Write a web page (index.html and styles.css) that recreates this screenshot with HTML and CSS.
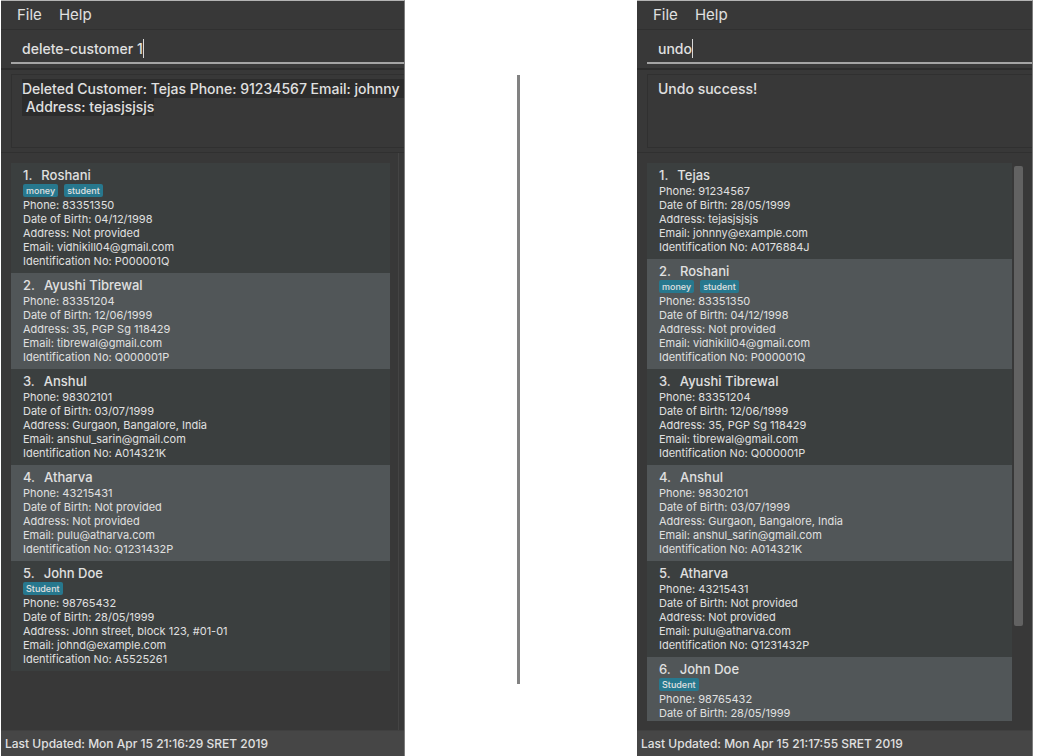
FILE: index.html
```html
<!DOCTYPE html>
<html lang="en">
<head>
<meta charset="utf-8">
<title>Customer list: delete and undo</title>
<link rel="stylesheet" href="styles.css">
</head>
<body>
<main class="compare">
  <section class="window">
    <nav class="menu"><button type="button">File</button><button type="button">Help</button></nav>
    <div class="command"><div class="field"><input type="text" size="14" value="delete-customer 1" aria-label="Command"><span class="caret"></span></div></div>
    <div class="result"><div class="result-box"><p class="message"><span class="selected">Deleted Customer: Tejas Phone: 91234567 Email: johnny  
 Address: tejasjsjsjs</span></p></div></div>
    <div class="content">
      <ol class="list">
        <li class="card"><h2><span>1.</span>Roshani</h2><div class="tags"><span>money</span><span>student</span></div><p>Phone: 83351350</p><p>Date of Birth: 04/12/1998</p><p>Address: Not provided</p><p>Email: vidhikill04@gmail.com</p><p>Identification No: P000001Q</p></li>
        <li class="card"><h2><span>2.</span>Ayushi Tibrewal</h2><p>Phone: 83351204</p><p>Date of Birth: 12/06/1999</p><p>Address: 35, PGP Sg 118429</p><p>Email: tibrewal@gmail.com</p><p>Identification No: Q000001P</p></li>
        <li class="card"><h2><span>3.</span>Anshul</h2><p>Phone: 98302101</p><p>Date of Birth: 03/07/1999</p><p>Address: Gurgaon, Bangalore, India</p><p>Email: anshul_sarin@gmail.com</p><p>Identification No: A014321K</p></li>
        <li class="card"><h2><span>4.</span>Atharva</h2><p>Phone: 43215431</p><p>Date of Birth: Not provided</p><p>Address: Not provided</p><p>Email: pulu@atharva.com</p><p>Identification No: Q1231432P</p></li>
        <li class="card"><h2><span>5.</span>John Doe</h2><div class="tags"><span>Student</span></div><p>Phone: 98765432</p><p>Date of Birth: 28/05/1999</p><p>Address: John street, block 123, #01-01</p><p>Email: johnd@example.com</p><p>Identification No: A5525261</p></li>
      </ol>
      <div class="splitter"></div>
    </div>
    <footer class="status">Last Updated: Mon Apr 15 21:16:29 SRET 2019</footer>
  </section>

  <div class="gap"><div class="rule"></div></div>

  <section class="window">
    <nav class="menu"><button type="button">File</button><button type="button">Help</button></nav>
    <div class="command"><div class="field"><input type="text" size="4" value="undo" aria-label="Command"><span class="caret"></span></div></div>
    <div class="result"><div class="result-box"><p class="message">Undo success!</p></div></div>
    <div class="content">
      <ol class="list">
        <li class="card"><h2><span>1.</span>Tejas</h2><p>Phone: 91234567</p><p>Date of Birth: 28/05/1999</p><p>Address: tejasjsjsjs</p><p>Email: johnny@example.com</p><p>Identification No: A0176884J</p></li>
        <li class="card"><h2><span>2.</span>Roshani</h2><div class="tags"><span>money</span><span>student</span></div><p>Phone: 83351350</p><p>Date of Birth: 04/12/1998</p><p>Address: Not provided</p><p>Email: vidhikill04@gmail.com</p><p>Identification No: P000001Q</p></li>
        <li class="card"><h2><span>3.</span>Ayushi Tibrewal</h2><p>Phone: 83351204</p><p>Date of Birth: 12/06/1999</p><p>Address: 35, PGP Sg 118429</p><p>Email: tibrewal@gmail.com</p><p>Identification No: Q000001P</p></li>
        <li class="card"><h2><span>4.</span>Anshul</h2><p>Phone: 98302101</p><p>Date of Birth: 03/07/1999</p><p>Address: Gurgaon, Bangalore, India</p><p>Email: anshul_sarin@gmail.com</p><p>Identification No: A014321K</p></li>
        <li class="card"><h2><span>5.</span>Atharva</h2><p>Phone: 43215431</p><p>Date of Birth: Not provided</p><p>Address: Not provided</p><p>Email: pulu@atharva.com</p><p>Identification No: Q1231432P</p></li>
        <li class="card"><h2><span>6.</span>John Doe</h2><div class="tags"><span>Student</span></div><p>Phone: 98765432</p><p>Date of Birth: 28/05/1999</p></li>
      </ol>
      <div class="scrollbar"><div class="thumb"></div></div>
    </div>
    <footer class="status">Last Updated: Mon Apr 15 21:17:55 SRET 2019</footer>
  </section>
</main>
</body>
</html>
```
FILE: styles.css
```css
* { box-sizing: border-box; }
body {
  margin: 0;
  background: #fff;
  color: #e0e0e0;
  font-family: Inter, "Liberation Sans", sans-serif;
  font-size: 11px;
}
h2, p, ol { margin: 0; padding: 0; font-weight: 400; }
button, input { font: inherit; color: inherit; background: none; border: 0; padding: 0; margin: 0; }

.compare {
  display: grid;
  grid-template-columns: 404fr 232fr 396fr;
  height: 100vh;
  padding: 0 4px 0 1px;
}
.window {
  display: flex;
  flex-direction: column;
  min-width: 0;
  min-height: 0;
  overflow: hidden;
  background: #383838;
  border-top: 1px solid #b4b4b4;
  border-right: 1px solid #7c7c7c;
}
.gap { display: flex; justify-content: center; padding: 75px 5px 72px 0; }
.rule { width: 3px; background: #828282; }

.menu {
  display: flex;
  gap: 17px;
  padding: 4px 16px;
  border-bottom: 1px solid #303030;
  font-size: 15px;
  line-height: 20px;
}
.command { padding: 6px 0 4px 10px; border-bottom: 2px solid #2c2c2c; }
.field {
  display: flex;
  align-items: center;
  padding: 3px 0 4px 11px;
  border-bottom: 2px solid #a4a4a4;
  font-size: 14px;
  font-weight: 500;
}
.field input { field-sizing: content; height: 19px; outline: 0; }
.caret { width: 1px; height: 19px; background: #d8d8d8; }

.result { padding: 4px 0 4px 10px; border-bottom: 1px solid #303030; }
.result-box {
  height: 74px;
  padding: 5px 0 0 10px;
  overflow: hidden;
  border: 1px solid #303030;
  border-right: 0;
}
.message { font-size: 14px; font-weight: 500; line-height: 18px; white-space: pre; }
.selected { background: #2c2c2c; padding: 1px 0; }

.content {
  display: flex;
  flex: 1;
  min-height: 0;
  padding-left: 10px;
}
.list { flex: 1; min-width: 0; margin: 10px 0 9px; overflow: hidden; list-style: none; }
.card { padding: 4px 12px 5px; background: #3b3f3f; }
.card:nth-child(even) { background: #515658; }
.card h2 { display: flex; gap: 9px; font-size: 13px; font-weight: 500; line-height: 17px; }
.card p { line-height: 14px; }
.tags { display: flex; gap: 6px; height: 14px; font-size: 9px; font-weight: 500; line-height: 13px; }
.tags span { height: 13px; padding: 0 3px; border-radius: 2px; background: #27788e; }

.splitter { width: 6px; margin-left: 8px; border-left: 1px solid #444; }
.scrollbar { width: 20px; padding: 13px 9px 10px 2px; }
.thumb { height: 83%; border-radius: 2px; background: #626262; }

.status {
  padding: 4px;
  background: #464646;
  border-top: 1px solid #404040;
  font-size: 12px;
  font-weight: 500;
  line-height: 17px;
}
```
